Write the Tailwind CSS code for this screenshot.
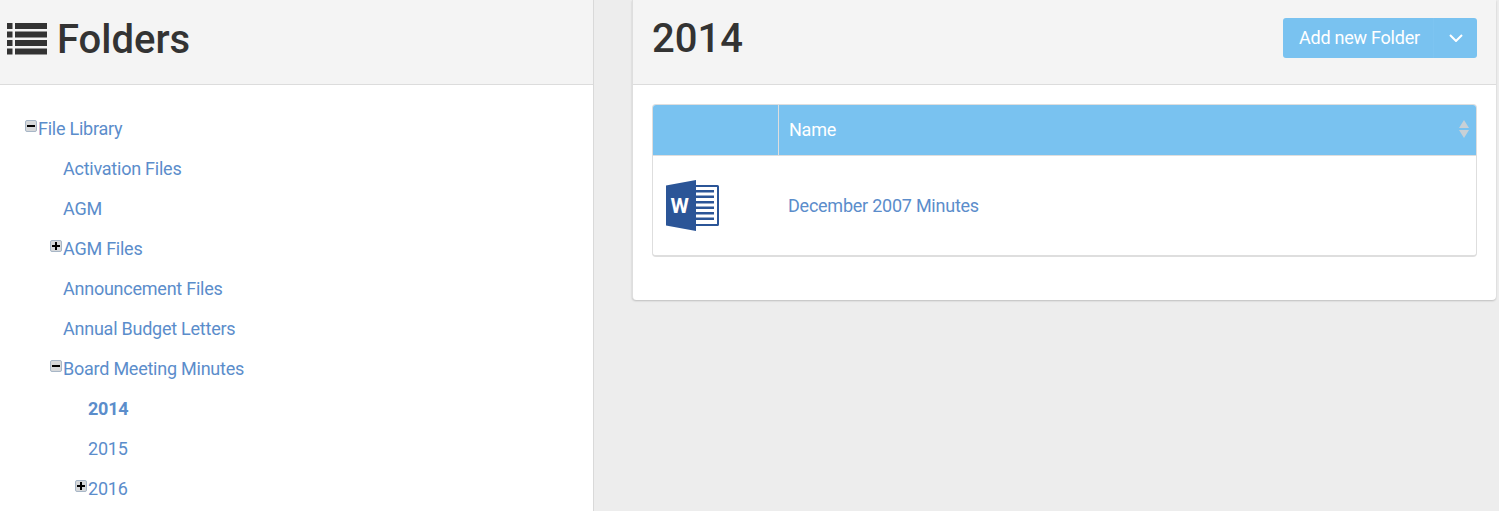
<!DOCTYPE html>
<html lang="en">

<head>
    <meta charset="UTF-8">
    <meta name="viewport" content="width=device-width, initial-scale=1.0">
    <title>Folders</title>
    <script src="https://cdn.jsdelivr.net/npm/@tailwindcss/browser@4"></script>
</head>

<body class="bg-[#ededed] h-[511px] overflow-hidden font-['Roboto',sans-serif] text-[18px] tracking-[-0.24px] text-[#5b8dcb]">
    <div class="flex h-full">
        <!-- Folder tree -->
        <div class="w-[594px] shrink-0 bg-white border-r border-[#d9d9d9] overflow-hidden">
            <div class="h-[85px] bg-[#f4f4f4] border-b border-[#dcdcdc] flex items-center pl-[7px] gap-[10px] text-[#333]">
                <svg width="40" height="32" viewBox="0 0 40 32" fill="#333" class="mt-[-7px]">
                    <rect x="0" y="0" width="5.500" height="6" />
                    <rect x="8" y="0" width="32" height="6" />
                    <rect x="0" y="8.500" width="5.500" height="6" />
                    <rect x="8" y="8.500" width="32" height="6" />
                    <rect x="0" y="17" width="5.500" height="6" />
                    <rect x="8" y="17" width="32" height="6" />
                    <rect x="0" y="25.500" width="5.500" height="6" />
                    <rect x="8" y="25.500" width="32" height="6" />
                </svg>
                <h1 class="text-[40px] leading-none mt-[-5px] font-medium tracking-[0px]">Folders</h1>
            </div>
            <ul class="pt-[23px] pl-[38px] [&_li]:h-10 [&_li]:flex [&_li]:items-center">
                <li><span class="w-[12px] h-[12px] -ml-[13px] mr-[1px] mt-[-4px] rounded-[2px] border border-[#a7b6c7] bg-[#d6d8da] flex items-center justify-center"><span class="w-[8px] h-[2px] bg-black"></span></span>File Library</li>
                <li class="ml-[25px]">Activation Files</li>
                <li class="ml-[25px]">AGM</li>
                <li class="ml-[25px]"><span class="w-[12px] h-[12px] -ml-[13px] mr-[1px] mt-[-4px] rounded-[2px] border border-[#a7b6c7] bg-[#d6d8da] flex items-center justify-center"><svg width="8" height="8" viewBox="0 0 8 8" fill="#000"><path d="M3 0h2v3h3v2H5v3H3V5H0V3h3z" /></svg></span>AGM Files</li>
                <li class="ml-[25px]">Announcement Files</li>
                <li class="ml-[25px]">Annual Budget Letters</li>
                <li class="ml-[25px]"><span class="w-[12px] h-[12px] -ml-[13px] mr-[1px] mt-[-4px] rounded-[2px] border border-[#a7b6c7] bg-[#d6d8da] flex items-center justify-center"><span class="w-[8px] h-[2px] bg-black"></span></span>Board Meeting Minutes</li>
                <li class="ml-[50px] font-bold">2014</li>
                <li class="ml-[50px]">2015</li>
                <li class="ml-[50px]"><span class="w-[12px] h-[12px] -ml-[13px] mr-[1px] mt-[-4px] rounded-[2px] border border-[#a7b6c7] bg-[#d6d8da] flex items-center justify-center"><svg width="8" height="8" viewBox="0 0 8 8" fill="#000"><path d="M3 0h2v3h3v2H5v3H3V5H0V3h3z" /></svg></span>2016</li>
            </ul>
        </div>

        <!-- Folder contents -->
        <div class="flex-1 pl-[38px] pr-[3px]">
            <div class="h-[300px] bg-white rounded-b-[4px] shadow-[0_1px_2px_rgba(0,0,0,0.2)] border-l border-[#dedede]">
                <div class="h-[85px] bg-[#f4f4f4] border-b border-[#dcdcdc] flex items-center justify-between pl-[19px] pr-[19px]">
                    <h2 class="text-[40px] leading-none text-[#333] mt-[-6px] font-medium tracking-[0px]">2014</h2>
                    <div class="h-10 w-[194px] mt-[-9px] bg-[#79c2f0] rounded-[3px] flex items-center text-white">
                        <span class="w-[151px] pl-[16px] h-full flex items-center border-r border-[#7dc4f1]">Add new Folder</span>
                        <svg width="14" height="8" viewBox="0 0 14 8" fill="none" stroke="#fff" stroke-width="2" class="ml-[15px]">
                            <path d="M1 1l6 6 6-6" />
                        </svg>
                    </div>
                </div>
                <div class="mx-[19px] mt-[19px] h-[153px] border border-[#dedede] border-b-2 rounded-[4px] overflow-hidden">
                    <div class="h-[51px] bg-[#79c2f0] flex text-white border-b border-[#dedede]">
                        <div class="w-[126px] border-r border-[#dedede]"></div>
                        <div class="flex-1 flex items-center justify-between pl-[10px] pr-[6px] pb-[2px]">
                            <span>Name</span>
                            <svg width="12" height="18" viewBox="0 0 12 18" fill="#c8d0d6">
                                <path d="M6 0l5 8H1zM1 10h10l-5 8z" />
                            </svg>
                        </div>
                    </div>
                    <div class="flex items-center h-[99px]">
                        <div class="w-[135px] pl-[13px]">
                            <svg width="53" height="51" viewBox="0 0 53 51" class="block">
                                <path d="M28 5h23.500a1.500 1.500 0 0 1 1.500 1.500v38a1.500 1.500 0 0 1-1.500 1.500H28z" fill="#2b5597" />
                                <rect x="28" y="7" width="23" height="37" fill="#fff" />
                                <path d="M30 10h18v2.500H30zM30 15.500h18v2.500H30zM30 21h18v2.500H30zM30 26.500h18v2.500H30zM30 32h18v2.500H30zM30 37.500h18v2.500H30z" fill="#2b5597" />
                                <path d="M0 5.500L30 0v51L0 45.500z" fill="#2b5597" />
                                <text x="4.500" y="32.500" font-family="Roboto" font-weight="700" font-size="21" fill="#fff" letter-spacing="0">W</text>
                            </svg>
                        </div>
                        <span>December 2007 Minutes</span>
                    </div>
                </div>
            </div>
        </div>
    </div>
</body>

</html>
